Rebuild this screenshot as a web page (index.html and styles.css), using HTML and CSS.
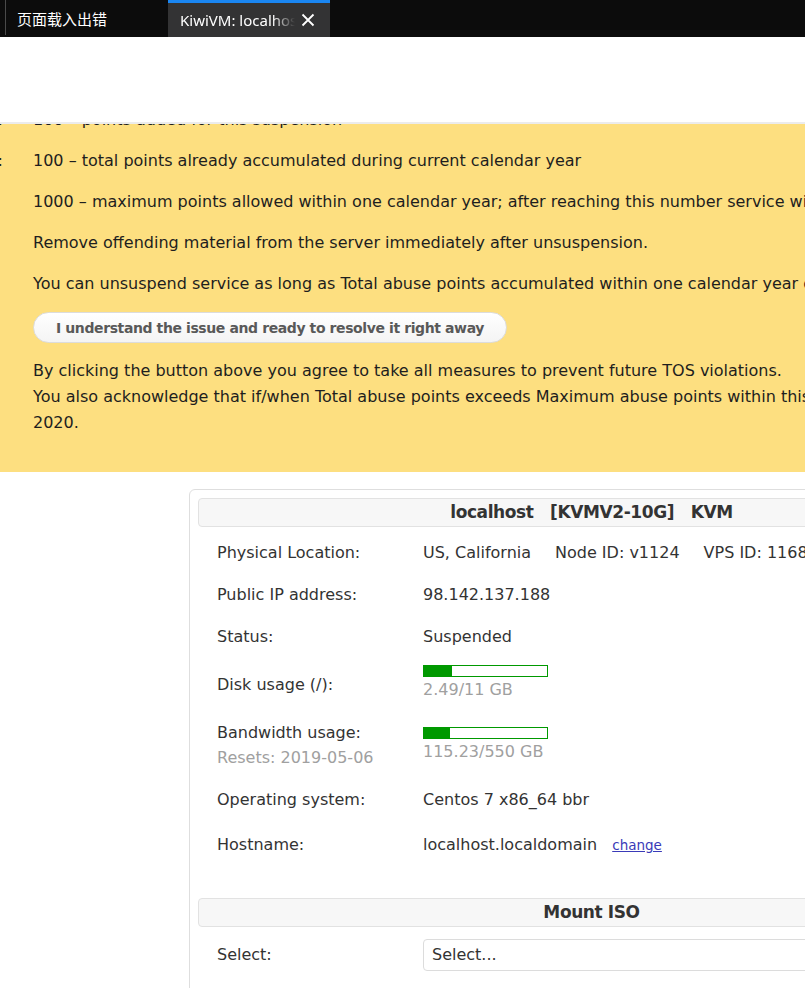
FILE: index.html
```html
<!DOCTYPE html>
<html lang="en">
<head>
<meta charset="utf-8">
<title>KiwiVM: localhost</title>
<link rel="stylesheet" href="styles.css">
</head>
<body>
<div class="tabbar">
  <div class="tab tab-idle"><span class="tab-sep"></span><span class="tab-title">页面载入出错</span></div>
  <div class="tab tab-active">
    <span class="tab-title fade">KiwiVM: localhost</span>
    <svg class="tab-close" width="14" height="14" viewBox="0 0 14 14"><path d="M1.5 1.5 L12.5 12.5 M12.5 1.5 L1.5 12.5" stroke="#fff" stroke-width="1.8" fill="none"/></svg>
  </div>
</div>
<div class="toolbar"></div>

<section class="notice">
  <div class="notice-grid">
    <div class="nlabel"><span>Abuse points for this suspension:</span></div>
    <div class="nval">100 – points added for this suspension</div>
    <div class="nlabel"><span>Total abuse points:</span></div>
    <div class="nval">100 – total points already accumulated during current calendar year</div>
    <div class="nlabel"></div>
    <div class="nval">1000 – maximum points allowed within one calendar year; after reaching this number service will be terminated</div>
    <div class="nlabel"></div>
    <div class="nval">Remove offending material from the server immediately after unsuspension.</div>
    <div class="nlabel"></div>
    <div class="nval">You can unsuspend service as long as Total abuse points accumulated within one calendar year do not exceed 1000.</div>
    <div class="nlabel"></div>
    <div class="nval nval-block">
      <button class="resolve-btn" type="button">I understand the issue and ready to resolve it right away</button>
      <p class="agree">By clicking the button above you agree to take all measures to prevent future TOS violations.<br>You also acknowledge that if/when Total abuse points exceeds Maximum abuse points within this calendar year, your service will be terminated until January 1,<br>2020.</p>
    </div>
  </div>
</section>

<section class="card">
  <div class="card-head">localhost&nbsp;&nbsp;&nbsp;[KVMV2-10G]&nbsp;&nbsp;&nbsp;KVM</div>
  <div class="rows rows-main">
    <div class="row">
      <div class="lbl">Physical Location:</div>
      <div class="val"><span class="gap">US, California</span><span class="gap">Node ID: v1124</span><span>VPS ID: 1168342</span></div>
    </div>
    <div class="row">
      <div class="lbl">Public IP address:</div>
      <div class="val">98.142.137.188</div>
    </div>
    <div class="row">
      <div class="lbl">Status:</div>
      <div class="val">Suspended</div>
    </div>
    <div class="row row-disk">
      <div class="lbl">Disk usage (/):</div>
      <div class="val">
        <div class="bar"><div class="bar-fill" style="width:23%"></div></div>
        <div class="muted">2.49/11 GB</div>
      </div>
    </div>
    <div class="row row-bw">
      <div class="lbl">Bandwidth usage:<div class="muted resets">Resets: 2019-05-06</div></div>
      <div class="val">
        <div class="bar"><div class="bar-fill" style="width:21%"></div></div>
        <div class="muted">115.23/550 GB</div>
      </div>
    </div>
    <div class="row row-os">
      <div class="lbl">Operating system:</div>
      <div class="val">Centos 7 x86_64 bbr</div>
    </div>
    <div class="row">
      <div class="lbl">Hostname:</div>
      <div class="val">localhost.localdomain <a class="change" href="#">change</a></div>
    </div>
  </div>
  <div class="card-head iso-head">Mount ISO</div>
  <div class="rows">
    <div class="row row-select">
      <div class="lbl">Select:</div>
      <div class="val"><div class="select">Select...</div></div>
    </div>
  </div>
</section>
</body>
</html>
```

FILE: styles.css
```css
html, body {
  margin: 0;
  padding: 0;
  background: #fff;
  overflow: hidden;
  width: 805px;
  height: 988px;
}
body {
  font-family: "DejaVu Sans", Verdana, sans-serif;
  font-size: 16px;
  color: #333;
}

/* tab bar */
.tabbar {
  height: 37px;
  background: #0c0c0c;
  display: flex;
  align-items: stretch;
}
.tab {
  display: flex;
  align-items: center;
  box-sizing: border-box;
  font-family: "Noto Sans", "Noto Sans CJK SC", sans-serif;
  font-size: 15px;
  color: #fff;
}
.tab-idle {
  width: 168px;
  position: relative;
  padding-left: 17px;
}
.tab-sep {
  position: absolute;
  left: 5px;
  top: 0;
  width: 1px;
  height: 35px;
  background: #4a4a4a;
}
.tab-active {
  width: 162px;
  background: #333334;
  border-top: 3px solid #1a86f2;
  padding-left: 12px;
  padding-right: 15px;
  gap: 6px;
}
.tab-title.fade {
  flex: 1;
  white-space: nowrap;
  overflow: hidden;
  -webkit-mask-image: linear-gradient(to right, #000 80%, transparent 100%);
  mask-image: linear-gradient(to right, #000 80%, transparent 100%);
}
.tab-close { flex: none; }

.toolbar {
  height: 85px;
  background: #fff;
  border-bottom: 2px solid #ececec;
}

/* yellow notice */
.notice {
  background: #fddf80;
  height: 348px;
  overflow: hidden;
  color: #1e1e1e;
}
.notice-grid {
  display: grid;
  grid-template-columns: 3px auto;
  column-gap: 30px;
  margin-top: -25px;
  line-height: 41px;
}
.nlabel {
  display: flex;
  justify-content: flex-end;
  overflow: hidden;
  white-space: nowrap;
}
.nval { white-space: nowrap; }
.nval-block { line-height: 26px; }
.resolve-btn {
  display: block;
  margin-top: 8px;
  width: 474px;
  height: 31px;
  border: 1px solid #dcdcdc;
  border-radius: 16px;
  background: linear-gradient(#ffffff, #f4f4f4);
  font-family: "DejaVu Sans", sans-serif;
  font-weight: bold;
  font-size: 14px;
  letter-spacing: -0.4px;
  color: #595959;
  padding: 0;
}
.agree {
  margin: 15px 0 0;
}

/* card */
.card {
  margin: 17px 0 0 189px;
  width: 805px;
  box-sizing: border-box;
  border: 1px solid #dedede;
  border-radius: 6px;
  padding: 8px;
  padding-bottom: 40px;
}
.card-head {
  height: 29px;
  box-sizing: border-box;
  border: 1px solid #e2e2e2;
  border-radius: 4px;
  background: #f7f7f7;
  text-align: center;
  font-weight: bold;
  font-size: 17px;
  letter-spacing: -0.4px;
  line-height: 27px;
  color: #333;
}
.rows {
  padding-left: 19px;
}
.rows-main { margin-top: 5px; }
.row {
  display: grid;
  grid-template-columns: 206px 1fr;
  line-height: 18px;
  padding: 12px 0;
  white-space: nowrap;
}
.gap { margin-right: 24px; }
.muted { color: #a0a0a0; }
.row-disk { padding: 7px 0 12px; }
.row-disk .lbl { margin-top: 11px; }
.row-bw { padding-top: 13px; }
.row-bw .val { margin-top: 3px; }
.resets { margin-top: 7px; }
.row-os { padding-bottom: 15px; }
.bar {
  width: 125px;
  height: 12px;
  box-sizing: border-box;
  border: 1px solid #009900;
  background: #fff;
  margin-bottom: 4px;
}
.bar-fill {
  height: 100%;
  background: #009900;
}
.change {
  color: #3a3ab8;
  font-size: 13.5px;
  margin-left: 10px;
}
.iso-head { margin-top: 32px; }
.row-select {
  align-items: center;
  padding-top: 12px;
}
.select {
  height: 32px;
  box-sizing: border-box;
  border: 1px solid #dcdcdc;
  border-radius: 4px;
  padding-left: 8px;
  line-height: 30px;
  background: #fff;
}
```
